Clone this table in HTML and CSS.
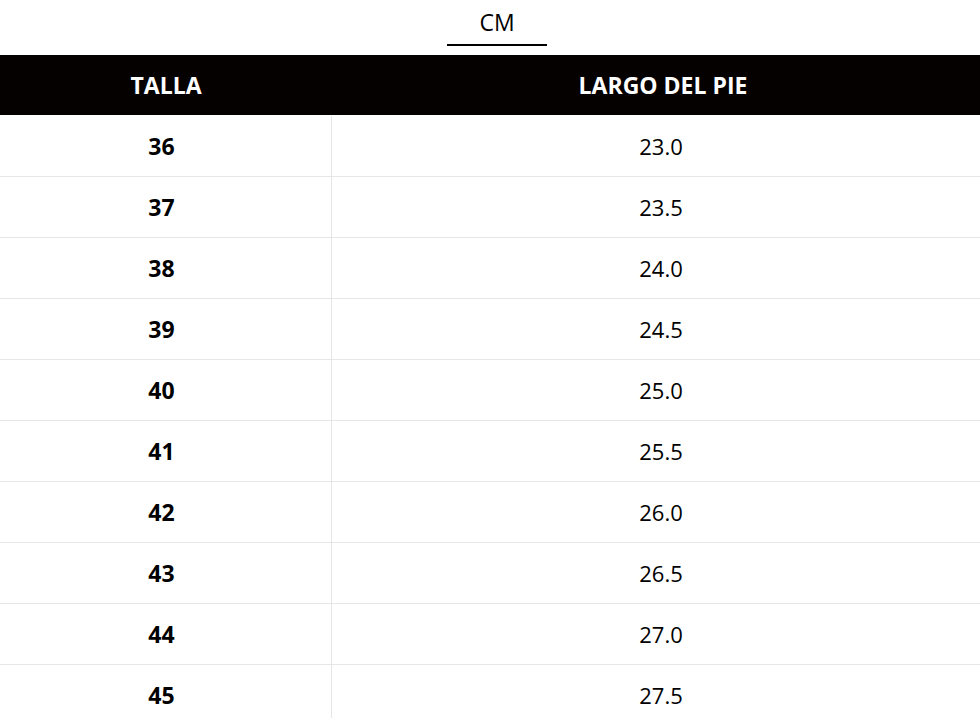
FILE: index.html
```html
<!DOCTYPE html>
<html lang="es">
<head>
<meta charset="utf-8">
<title>Guía de tallas</title>
<link rel="stylesheet" href="styles.css">
</head>
<body>
<div class="page">
  <div class="tabs">
    <div class="tab active">CM</div>
  </div>
  <div class="table">
    <div class="head">
      <div class="hcell">TALLA</div>
      <div class="hcell">LARGO DEL PIE</div>
    </div>
    <div class="row"><div class="size">36</div><div class="len">23.0</div></div>
    <div class="row"><div class="size">37</div><div class="len">23.5</div></div>
    <div class="row"><div class="size">38</div><div class="len">24.0</div></div>
    <div class="row"><div class="size">39</div><div class="len">24.5</div></div>
    <div class="row"><div class="size">40</div><div class="len">25.0</div></div>
    <div class="row"><div class="size">41</div><div class="len">25.5</div></div>
    <div class="row"><div class="size">42</div><div class="len">26.0</div></div>
    <div class="row"><div class="size">43</div><div class="len">26.5</div></div>
    <div class="row"><div class="size">44</div><div class="len">27.0</div></div>
    <div class="row"><div class="size">45</div><div class="len">27.5</div></div>
  </div>
</div>
</body>
</html>
```

FILE: styles.css
```css
html, body {
  margin: 0;
  padding: 0;
  background: #fff;
  overflow: hidden;
}
body {
  font-family: "Open Sans", "Noto Sans", "Liberation Sans", sans-serif;
  color: #000;
}
.page {
  width: 994px;
}
.tabs {
  display: flex;
  justify-content: center;
  height: 55px;
}
.tab {
  width: 100px;
  height: 46px;
  box-sizing: border-box;
  text-align: center;
  font-size: 23px;
  line-height: 44px;
}
.tab.active {
  border-bottom: 2px solid #000;
}
.head {
  display: grid;
  grid-template-columns: 332px 1fr;
  background: #060101;
  color: #fff;
  height: 60px;
  align-items: center;
  font-weight: 700;
  font-size: 23px;
}
.hcell {
  text-align: center;
}
.row {
  display: grid;
  grid-template-columns: 332px 1fr;
  height: 61px;
  box-sizing: border-box;
  border-bottom: 1px solid #e6e6e6;
}
.head + .row {
  height: 62px;
  padding-top: 1px;
}
.size, .len {
  display: flex;
  align-items: center;
  justify-content: center;
}
.size {
  font-weight: 700;
  font-size: 23px;
  border-right: 1px solid #e6e6e6;
  padding-right: 8px;
}
.len {
  font-size: 22px;
  padding-right: 4px;
}
```
